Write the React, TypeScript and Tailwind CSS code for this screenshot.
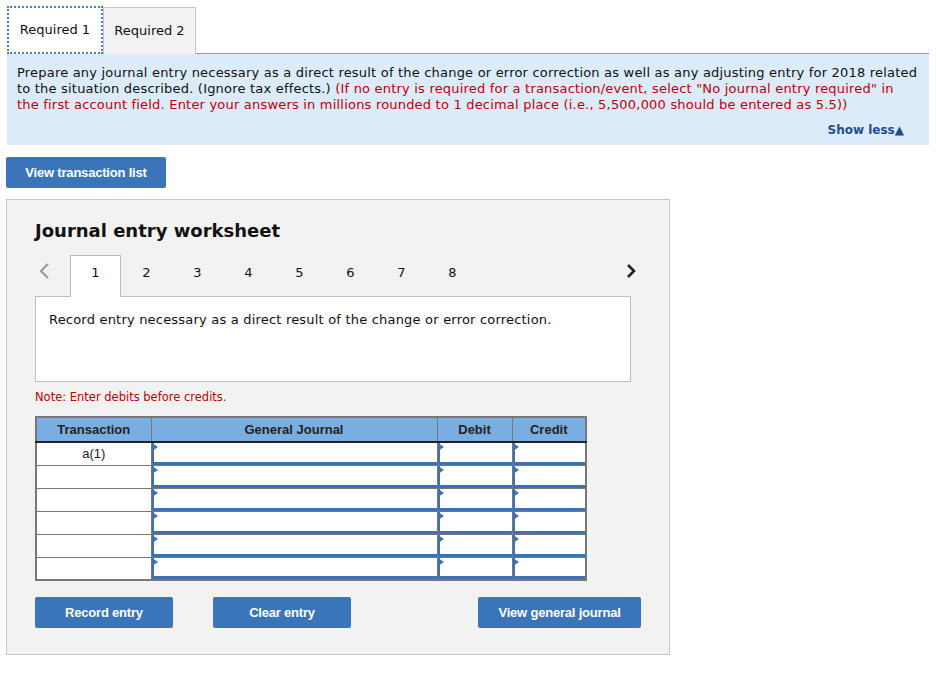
import React from "react";

const verdana = { fontFamily: '"DejaVu Sans", Verdana, sans-serif' };
const arial = { fontFamily: '"Liberation Sans", Arial, sans-serif' };

const InputCell = ({ w }: { w: string }) => (
  <td className={`${w} h-[23px] border border-[#777] p-0 relative`}>
    <div className="absolute inset-0 bg-white border-l-2 border-b-[3px] border-[#3c72b5]" />
    <div className="absolute left-0 top-0 w-0 h-0 border-t-[4px] border-b-[4px] border-l-[6px] border-t-transparent border-b-transparent border-l-[#3c72b5]" />
  </td>
);

const Btn = ({ label, w }: { label: string; w: string }) => (
  <button
    className={`${w} h-[31px] rounded-[2px] bg-[#3a75b9] text-white text-[13px] font-bold tracking-[-0.2px]`}
    style={arial}
  >
    {label}
  </button>
);

export default function App() {
  const rows = ["a(1)", "", "", "", "", ""];
  return (
    <div className="w-[936px] h-[685px] bg-white text-[#111]" style={verdana}>
      {/* tabs */}
      <div className="flex pl-[7px] pt-[6px]">
        <div className="w-[96px] h-[48px] flex items-center justify-center text-[13px] bg-white border-2 border-dotted border-[#4a83c4] relative z-10">
          Required 1
        </div>
        <div className="w-[93px] h-[47px] mt-[1px] flex items-center justify-center text-[13px] bg-[#f2f2f2] border border-[#c4c4c4] border-b-0">
          Required 2
        </div>
      </div>

      {/* instructions */}
      <div className="ml-[7px] -mt-[1px] w-[922px] h-[92px] bg-[#dbebf9] border-t border-[#9a9a9a] px-[10px] pt-[11px] text-[13px] leading-[16px] tracking-[0.2px]">
        <p>
          Prepare any journal entry necessary as a direct result of the change or error correction as well as any adjusting entry for 2018 related to the situation described. (Ignore tax effects.){" "}
          <span className="text-[#c00000]">
            (If no entry is required for a transaction/event, select "No journal entry required" in the first account field. Enter your answers in millions rounded to 1 decimal place (i.e., 5,500,000 should be entered as 5.5))
          </span>
        </p>
        <div className="flex justify-end pr-[15px] mt-[9px]">
          <span className="text-[12px] font-bold text-[#1f4f8f] tracking-[0px]">Show less▲</span>
        </div>
      </div>

      <div className="pl-[6px] pt-[12px]">
        <Btn label="View transaction list" w="w-[160px]" />
      </div>

      {/* worksheet */}
      <div className="ml-[6px] mt-[11px] w-[664px] h-[456px] bg-[#f2f2f2] border border-[#c8c8c8] pl-[28px] pt-[19px]">
        <h2 className="text-[18px] font-bold leading-[24px]">Journal entry worksheet</h2>

        <div className="relative mt-[13px] w-[596px] h-[41px] flex items-end">
          <svg className="absolute left-[3px] top-[6px]" width="12" height="18" viewBox="0 0 12 18">
            <path d="M10 2 L3 9 L10 16" fill="none" stroke="#9a9a9a" strokeWidth="2.2" />
          </svg>
          <svg className="absolute right-[-6px] top-[7px]" width="12" height="16" viewBox="0 0 12 16">
            <path d="M3 2 L9 8 L3 14" fill="none" stroke="#222" strokeWidth="2.6" />
          </svg>
          <div className="ml-[35px] w-[51px] h-[42px] bg-white border border-[#bbb] border-b-0 relative z-10 flex items-center justify-center text-[13px] pb-[7px]">
            1
          </div>
          {[2, 3, 4, 5, 6, 7, 8].map((n) => (
            <div key={n} className="w-[51px] h-[41px] flex items-center justify-center text-[13px] pb-[8px]">
              {n}
            </div>
          ))}
        </div>

        <div className="w-[596px] h-[86px] -mt-[1px] bg-white border border-[#bdbdbd] pl-[13px] pt-[13px] text-[13px] tracking-[0.2px]">
          Record entry necessary as a direct result of the change or error correction.
        </div>

        <p className="mt-[7px] text-[11.5px] text-[#c00000]">Note: Enter debits before credits.</p>

        <table className="mt-[10px] border-collapse border-2 border-[#777] text-[13px]" style={arial}>
          <thead>
            <tr className="bg-[#7aaee3] h-[25px] text-[#222]">
              <th className="w-[115px] border border-[#777] border-b-2 border-b-[#222] font-bold">Transaction</th>
              <th className="w-[286px] border border-[#777] border-b-2 border-b-[#222] font-bold">General Journal</th>
              <th className="w-[75px] border border-[#777] border-b-2 border-b-[#222] font-bold">Debit</th>
              <th className="w-[74px] border border-[#777] border-b-2 border-b-[#222] font-bold">Credit</th>
            </tr>
          </thead>
          <tbody>
            {rows.map((r, i) => (
              <tr key={i} className="h-[23px]">
                <td className="w-[115px] bg-white border border-[#777] text-center align-top pt-[1px] text-[#222]">{r}</td>
                <InputCell w="w-[286px]" />
                <InputCell w="w-[75px]" />
                <InputCell w="w-[74px]" />
              </tr>
            ))}
          </tbody>
        </table>

        <div className="flex mt-[16px]">
          <Btn label="Record entry" w="w-[138px]" />
          <div className="ml-[40px]">
            <Btn label="Clear entry" w="w-[138px]" />
          </div>
          <div className="ml-[127px]">
            <Btn label="View general journal" w="w-[163px]" />
          </div>
        </div>
      </div>
    </div>
  );
}
